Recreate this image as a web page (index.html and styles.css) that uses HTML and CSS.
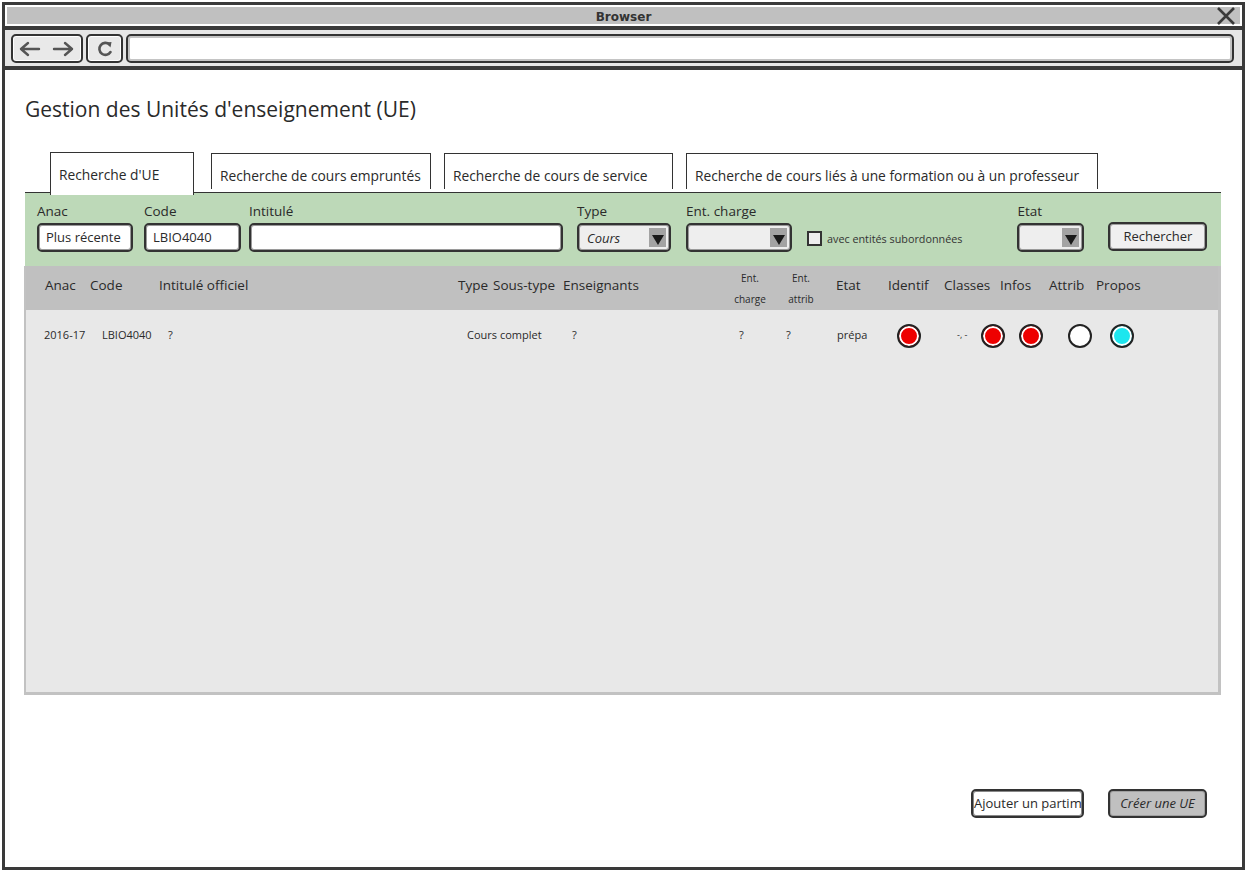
FILE: index.html
```html
<!DOCTYPE html>
<html lang="fr">
<head>
<meta charset="utf-8">
<title>Gestion des Unités d'enseignement (UE)</title>
<link rel="stylesheet" href="styles.css">
</head>
<body>
<div class="browser">
  <div class="titlebar">
    <span class="titlebar-text">Browser</span>
    <svg class="close" width="20" height="18" viewBox="0 0 20 18"><path d="M2 1 L18 17 M18 1 L2 17" stroke="#3a3a3a" stroke-width="2.6" fill="none"/></svg>
  </div>
  <div class="toolbar">
    <div class="tbtn nav">
      <svg width="56" height="16" viewBox="0 0 56 16"><path d="M2 8 H20 M9 2 L2 8 L9 14" stroke="#555" stroke-width="2.4" fill="none" stroke-linecap="round" stroke-linejoin="round"/><path d="M35 8 H53 M46 2 L53 8 L46 14" stroke="#555" stroke-width="2.4" fill="none" stroke-linecap="round" stroke-linejoin="round"/></svg>
    </div>
    <div class="tbtn reload">
      <svg width="18" height="18" viewBox="0 0 18 18"><path d="M13.5 4.5 A6 6 0 1 0 14.5 12" stroke="#555" stroke-width="2.6" fill="none" stroke-linecap="round"/><path d="M10 2.5 L15.5 2 L14.5 7.5 Z" fill="#555"/></svg>
    </div>
    <div class="url"></div>
  </div>
  <div class="content">
    <h1 class="page-title">Gestion des Unités d'enseignement (UE)</h1>
    <div class="tabs">
      <div class="tab tab-active tab-1">Recherche d'UE</div>
      <div class="tab tab-2">Recherche de cours empruntés</div>
      <div class="tab tab-3">Recherche de cours de service</div>
      <div class="tab tab-4">Recherche de cours liés à une formation ou à un professeur</div>
    </div>
    <div class="search">
      <div class="field f-anac">
        <label>Anac</label>
        <div class="input">Plus récente</div>
      </div>
      <div class="field f-code">
        <label>Code</label>
        <div class="input">LBIO4040</div>
      </div>
      <div class="field f-intitule">
        <label>Intitulé</label>
        <div class="input"></div>
      </div>
      <div class="field f-type">
        <label>Type</label>
        <div class="select"><span class="select-value">Cours</span><span class="select-arrow"></span></div>
      </div>
      <div class="field f-charge">
        <label>Ent. charge</label>
        <div class="select"><span class="select-value"></span><span class="select-arrow"></span></div>
      </div>
      <div class="check">
        <span class="checkbox"></span>
        <span class="check-label">avec entités subordonnées</span>
      </div>
      <div class="field f-etat">
        <label>Etat</label>
        <div class="select"><span class="select-value"></span><span class="select-arrow"></span></div>
      </div>
      <div class="btn btn-search">Rechercher</div>
    </div>
    <div class="table">
      <div class="thead">
        <span class="h h-anac">Anac</span>
        <span class="h h-code">Code</span>
        <span class="h h-intitule">Intitulé officiel</span>
        <span class="h h-type">Type</span>
        <span class="h h-soustype">Sous-type</span>
        <span class="h h-ens">Enseignants</span>
        <span class="h h-charge"><span class="two">Ent.<br>charge</span></span>
        <span class="h h-attrib2"><span class="two">Ent.<br>attrib</span></span>
        <span class="h h-etat">Etat</span>
        <span class="h h-identif">Identif</span>
        <span class="h h-classes">Classes</span>
        <span class="h h-infos">Infos</span>
        <span class="h h-attrib">Attrib</span>
        <span class="h h-propos">Propos</span>
      </div>
      <div class="tbody">
        <div class="row">
          <span class="d d-anac">2016-17</span>
          <span class="d d-code">LBIO4040</span>
          <span class="d d-intitule">?</span>
          <span class="d d-soustype">Cours complet</span>
          <span class="d d-ens">?</span>
          <span class="d d-charge">?</span>
          <span class="d d-attrib2">?</span>
          <span class="d d-etat">prépa</span>
          <span class="d d-identif"><span class="dot dot-red"></span></span>
          <span class="d d-classes">-, -</span>
          <span class="d d-c1"><span class="dot dot-red"></span></span>
          <span class="d d-c2"><span class="dot dot-red"></span></span>
          <span class="d d-c3"><span class="dot dot-white"></span></span>
          <span class="d d-c4"><span class="dot dot-cyan"></span></span>
        </div>
      </div>
    </div>
    <div class="actions">
      <div class="btn btn-partim">Ajouter un partim</div>
      <div class="btn btn-create">Créer une UE</div>
    </div>
  </div>
</div>
</body>
</html>
```

FILE: styles.css
```css
* { box-sizing: border-box; }

body {
  margin: 0;
  background: #fff;
  color: #2a2a2a;
  font-family: "Open Sans", "DejaVu Sans", sans-serif;
}

.browser {
  margin: 2px 0 0 2px;
  width: 1243px;
  height: 868px;
  border: 3px solid #3a3a3a;
  display: flex;
  flex-direction: column;
}

.titlebar {
  position: relative;
  height: 17px;
  margin: 2px 2px 2px;
  background: #c0c0c0;
  display: flex;
  align-items: center;
  justify-content: center;
}

.titlebar-text {
  font-family: "DejaVu Sans", sans-serif;
  font-weight: bold;
  font-size: 12px;
  color: #333;
  padding-top: 2px;
}

.close {
  position: absolute;
  right: 4px;
  top: 0;
}

.toolbar {
  height: 44px;
  border-top: 4px solid #3a3a3a;
  border-bottom: 4px solid #3a3a3a;
  background: #e6e6e6;
  display: flex;
  align-items: flex-start;
  padding: 4px 8px 0 6px;
  gap: 3px;
}

.tbtn {
  height: 29px;
  border: 2px solid #333;
  border-radius: 5px;
  background: #e9e9e9;
  box-shadow: inset 0 0 0 1px #fff;
  display: flex;
  align-items: center;
  justify-content: center;
}

.nav { width: 72px; }
.reload { width: 37px; }

.url {
  flex: 1;
  height: 29px;
  border: 2px solid #333;
  border-radius: 5px;
  background: #fff;
  box-shadow: inset 0 0 0 2px #c4c4c4;
}

.content {
  flex: 1;
  padding: 24px 21px 0 20px;
  display: flex;
  flex-direction: column;
}

.page-title {
  margin: 0;
  font-weight: normal;
  font-size: 21px;
  line-height: 30px;
  color: #2a2a2a;
}

.tabs {
  margin-top: 28px;
  height: 40px;
  padding-left: 25px;
  display: flex;
  align-items: flex-start;
}

.tab {
  height: 36px;
  margin-top: 1px;
  border: 1px solid #333;
  border-bottom: none;
  background: #fff;
  font-size: 13.8px;
  padding: 12px 0 0 8px;
  white-space: nowrap;
}

.tab-active {
  position: relative;
  z-index: 1;
  height: 43px;
  margin-top: 0;
  padding-top: 12px;
}

.tab-1 { width: 144px; }
.tab-2 { width: 220px; margin-left: 17px; }
.tab-3 { width: 229px; margin-left: 13px; }
.tab-4 { width: 412px; margin-left: 13px; }

.search {
  height: 74px;
  border-top: 1px solid #333;
  background: #bdd9b8;
  display: flex;
  align-items: flex-start;
  padding: 8px 0 0 12px;
}

.field {
  display: flex;
  flex-direction: column;
}

.field label {
  font-size: 13.5px;
  line-height: 20px;
  height: 22px;
  color: #2a2a2a;
}

.input, .select {
  height: 29px;
  border: 2px solid #333;
  border-radius: 5px;
  box-shadow: inset 0 0 0 1px #9a9a9a;
  font-size: 13px;
  line-height: 25px;
  padding-left: 7px;
  white-space: nowrap;
  overflow: hidden;
}

.input { background: #fff; }

.select {
  background: #eeeeee;
  display: flex;
  padding-left: 0;
  padding-right: 0;
}

.select-value {
  flex: 1;
  padding-left: 8px;
  padding-top: 1px;
  font-style: italic;
}

.select-arrow {
  width: 17px;
  margin: 3px 3px 3px 0;
  background: #a3a3a3;
  position: relative;
}

.select-arrow::after {
  content: "";
  position: absolute;
  left: 3px;
  top: 7px;
  border-left: 6px solid transparent;
  border-right: 6px solid transparent;
  border-top: 10px solid #1a1a1a;
}

.f-anac { width: 96px; }
.f-code { width: 97px; margin-left: 11px; }
.f-intitule { width: 314px; margin-left: 8px; }
.f-type { width: 94px; margin-left: 14px; }
.f-charge { width: 106px; margin-left: 15px; }
.f-etat { width: 67px; margin-left: 55px; }

.check {
  margin: 30px 0 0 15px;
  display: flex;
  align-items: center;
  gap: 5px;
}

.checkbox {
  width: 15px;
  height: 15px;
  border: 2px solid #333;
  background: #eee;
}

.check-label {
  font-size: 10.8px;
  color: #333;
  white-space: nowrap;
}

.btn {
  height: 29px;
  border: 2px solid #333;
  border-radius: 5px;
  box-shadow: inset 0 0 0 1px #a0a0a0;
  font-size: 13px;
  line-height: 25px;
  text-align: center;
  white-space: nowrap;
  overflow: hidden;
}

.btn-search {
  width: 99px;
  margin: 21px 0 0 24px;
  background: #f0f0f0;
}

.table {
  height: 429px;
  margin-left: -1px;
  display: flex;
  flex-direction: column;
  border: 3px solid #c2c2c2;
  border-top: none;
  border-left-width: 2px;
  border-right-width: 3px;
}

.thead {
  height: 44px;
  background: #c0c0c0;
  display: flex;
  align-items: flex-start;
  padding: 9px 0 0 19px;
  font-size: 13.5px;
  white-space: nowrap;
}

.h { line-height: 20px; }

.two {
  display: block;
  font-size: 10px;
  line-height: 21px;
  margin-top: -7px;
  text-align: center;
}

.h-anac { width: 45px; }
.h-code { width: 69px; }
.h-intitule { width: 299px; }
.h-type { width: 35px; }
.h-soustype { width: 70px; }
.h-ens { width: 162px; }
.h-charge { width: 60px; padding-right: 10px; }
.h-attrib2 { width: 51px; padding-right: 19px; }
.h-etat { width: 52px; }
.h-identif { width: 56px; }
.h-classes { width: 56px; }
.h-infos { width: 49px; }
.h-attrib { width: 47px; }
.h-propos { width: 60px; }

.tbody {
  flex: 1;
  background: #e8e8e8;
}

.row {
  display: flex;
  align-items: center;
  height: 48px;
  padding-left: 18px;
  font-size: 11px;
  color: #2a2a2a;
  white-space: nowrap;
}

.d-anac { width: 58px; }
.d-code { width: 66px; }
.d-intitule { width: 299px; }
.d-soustype { width: 105px; }
.d-ens { width: 167px; }
.d-charge { width: 47px; }
.d-attrib2 { width: 51px; }
.d-etat { width: 60px; }
.d-identif { width: 60px; }
.d-classes { width: 24px; font-size: 9px; }
.d-c1 { width: 38px; }
.d-c2 { width: 49px; }
.d-c3 { width: 42px; }
.d-c4 { width: 30px; }

.dot {
  display: block;
  width: 24px;
  height: 24px;
  margin-top: 4px;
  border-radius: 50%;
  border: 2px solid #222;
  box-shadow: inset 0 0 0 2px #fff;
}

.dot-red { background: #ee0000; }
.dot-white { background: #fff; }
.dot-cyan { background: #1de6ee; }

.actions {
  margin-top: 94px;
  padding-right: 14px;
  display: flex;
  justify-content: flex-end;
  gap: 24px;
}

.btn-partim {
  width: 113px;
  background: #fff;
  text-align: left;
  padding-left: 1px;
  box-shadow: inset 0 0 0 1px #888;
}

.btn-create {
  width: 99px;
  background: #c0c0c0;
  font-style: italic;
}
```
